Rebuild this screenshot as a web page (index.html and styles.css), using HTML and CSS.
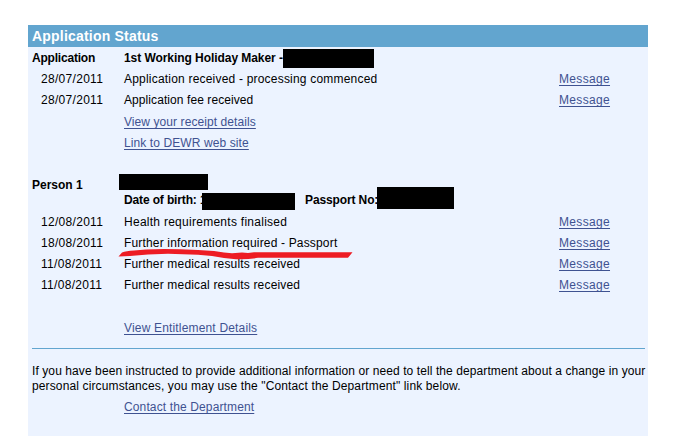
FILE: index.html
```html
<!DOCTYPE html>
<html lang="en">
<head>
    <meta charset="UTF-8">
    <title>Application Status</title>
    <link rel="stylesheet" href="styles.css">
</head>
<body>
    <div class="panel">
        <h1>Application Status</h1>

        <!-- Application -->
        <div class="row title">
            <span class="label application">Application</span>
            <span class="text visa">1st Working Holiday Maker -<span class="redacted visa-no"></span></span>
        </div>
        <div class="row">
            <span class="date">28/07/2011</span>
            <span class="text received">Application received - processing commenced</span>
            <a class="message" href="#">Message</a>
        </div>
        <div class="row">
            <span class="date">28/07/2011</span>
            <span class="text fee">Application fee received</span>
            <a class="message" href="#">Message</a>
        </div>
        <div class="row link-row receipt">
            <a href="#">View your receipt details</a>
        </div>
        <div class="row link-row dewr">
            <a href="#">Link to DEWR web site</a>
        </div>

        <!-- Person 1 -->
        <div class="row title person">
            <span class="label">Person 1</span>
            <span class="text"><span class="redacted person-name"></span></span>
        </div>
        <div class="row title details">
            <span class="text birth">Date of birth: 1<span class="redacted birth-date"></span></span>
            <span class="passport">Passport No:<span class="redacted passport-no"></span></span>
        </div>
        <div class="row">
            <span class="date">12/08/2011</span>
            <span class="text health">Health requirements finalised</span>
            <a class="message" href="#">Message</a>
        </div>
        <div class="row">
            <span class="date">18/08/2011</span>
            <span class="text">
                Further information required - Passport
                <svg class="marker" width="240" height="14" viewBox="0 0 240 14">
                    <path d="M0.5 8.5 L4 4.5 Q8 3 16 2.6 L28 1.5 L46 1 L62 1.3 L80 2 L96 3 L106 4.5 L114 5.2 L124 4.5 L130 5 L136 4.3 L234.5 4.3 L230 9.8 L140 9.8 Q130 11.6 118 11.2 L106 10 L94 8 L80 6.8 L50 5.8 L30 6.4 L12 8 Z" fill="#ed1c24"/>
                </svg>
            </span>
            <a class="message" href="#">Message</a>
        </div>
        <div class="row">
            <span class="date">11/08/2011</span>
            <span class="text">Further medical results received</span>
            <a class="message" href="#">Message</a>
        </div>
        <div class="row">
            <span class="date">11/08/2011</span>
            <span class="text">Further medical results received</span>
            <a class="message" href="#">Message</a>
        </div>
        <div class="row link-row entitlement">
            <a href="#">View Entitlement Details</a>
        </div>

        <hr>

        <p><span class="line-1">If you have been instructed to provide additional information or need to tell the department about a change in your</span><br>
        <span class="line-2">personal circumstances, you may use the "Contact the Department" link below.</span></p>
        <div class="row link-row contact">
            <a href="#">Contact the Department</a>
        </div>
    </div>
</body>
</html>
```

FILE: styles.css
```css
body {
    margin: 0;
    padding: 25px 31px 0 28px;
    background-color: #fff;
    font-family: "Liberation Sans", Arial, sans-serif;
    font-size: 12px;
    color: #000;
    overflow: hidden;
}
.panel {
    box-sizing: border-box;
    height: 411px;
    background-color: #ecf3ff;
}
h1 {
    margin: 0 0 1px;
    padding-left: 4px;
    height: 22px;
    line-height: 23px;
    background-color: #62a5cf;
    color: #fff;
    font-size: 14px;
    letter-spacing: 0.2px;
}
.row {
    display: flex;
    height: 21px;
    line-height: 21px;
    padding-left: 4px;
    white-space: nowrap;
}
.title {
    font-weight: bold;
}
.label {
    width: 92px;
}
.application {
    letter-spacing: -0.2px;
}
.date {
    box-sizing: border-box;
    width: 92px;
    padding-left: 9px;
    letter-spacing: 0.3px;
}
.text {
    position: relative;
    width: 435px;
    letter-spacing: 0.17px;
}
.title .visa {
    letter-spacing: -0.06px;
}
.received {
    letter-spacing: 0.2px;
}
.fee {
    letter-spacing: 0.08px;
}
.health {
    letter-spacing: 0.27px;
}
.link-row {
    padding-left: 96px;
}
a {
    color: #3f5291;
    text-decoration: underline;
    text-underline-offset: 2px;
}
.message {
    letter-spacing: 0.33px;
}
.receipt {
    margin-top: 1px;
    letter-spacing: 0.08px;
}
.dewr {
    letter-spacing: 0.1px;
}
.person {
    margin-top: 21px;
    height: 15px;
}
.details {
    padding-left: 96px;
    height: 22px;
}
.title .birth {
    width: 181px;
    letter-spacing: -0.14px;
}
.passport {
    position: relative;
    letter-spacing: -0.12px;
}
.entitlement {
    margin-top: 22px;
    letter-spacing: 0.17px;
}
/* blacked-out personal data */
.redacted {
    position: absolute;
    background-color: #000;
}
.visa-no {
    left: 159px;
    top: 1px;
    width: 91px;
    height: 19px;
}
.person-name {
    left: -5px;
    top: -1px;
    width: 89px;
    height: 16px;
}
.birth-date {
    left: 78px;
    top: 3px;
    width: 93px;
    height: 17px;
}
.passport-no {
    left: 72px;
    top: -3px;
    width: 77px;
    height: 22px;
}
.marker {
    position: absolute;
    left: -6px;
    top: 15px;
    z-index: 1;
}
hr {
    margin: 9px 3px 0 4px;
    border: 0;
    border-top: 1px solid #62a5cf;
}
p {
    margin: 15px 0 3px;
    padding-left: 4px;
    line-height: 15px;
    white-space: nowrap;
}
.line-1 {
    letter-spacing: 0.09px;
}
.line-2 {
    letter-spacing: 0.13px;
}
.contact {
    letter-spacing: 0.13px;
}
```
